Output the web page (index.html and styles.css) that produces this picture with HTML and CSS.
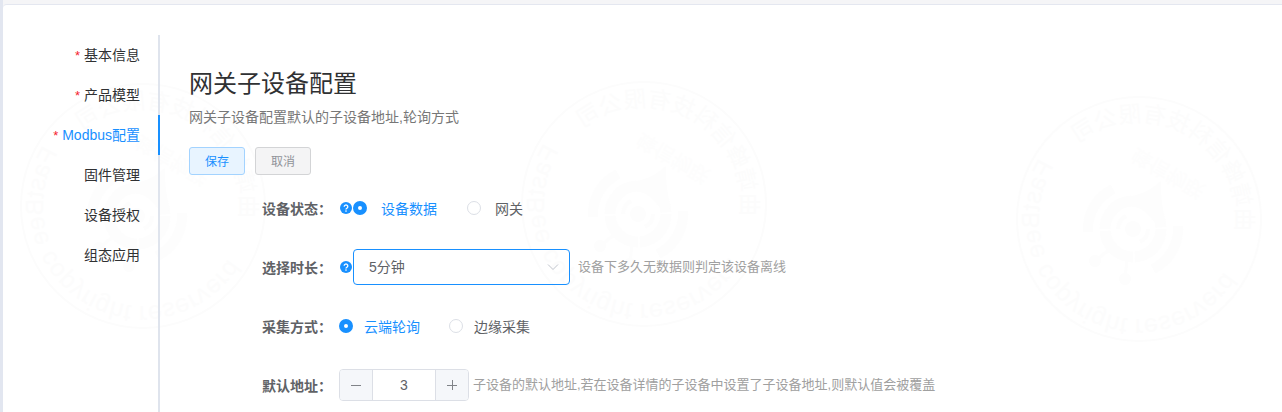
FILE: index.html
```
<!DOCTYPE html>
<html lang="zh-CN">
<head>
  <meta charset="UTF-8" />
  <meta name="viewport" content="width=device-width, initial-scale=1.0"/>
  <title>网关子设备配置</title>
  <link rel="stylesheet" href="styles.css">
</head>
<body>

  <!-- shared icons -->
  <svg class="sprite" aria-hidden="true">
    <symbol id="help" viewBox="0 0 12 12">
      <circle cx="6" cy="6" r="6" fill="#1890ff"/>
      <path d="M4.2 4.7a1.8 1.7 0 1 1 2.7 1.5c-.6.35-.9.6-.9 1.2" fill="none" stroke="#fff" stroke-width="1.3"/>
      <circle cx="6" cy="9.1" r=".8" fill="#fff"/>
    </symbol>
    <symbol id="stamp" viewBox="0 0 248 248">
      <g transform="translate(124 124) scale(1 -1)" fill="#fcfcfc">
        <circle r="122" fill="none" stroke="#fcfcfc" stroke-width="2"/>
        <path id="ring-en" d="M-100 0A100 100 0 0 1 100 0A100 100 0 0 1 -100 0" transform="rotate(-32)" fill="none"/>
        <text font-size="25"><textPath href="#ring-en">FastBee copyright reserverd</textPath></text>
        <path id="ring-cn" d="M97 0A97 97 0 0 1 -97 0A97 97 0 0 1 97 0" transform="rotate(-7)" fill="none"/>
        <text font-size="23"><textPath href="#ring-cn">曲靖蜂信科技有限公司</textPath></text>
      </g>
      <g transform="translate(118 134)">
        <g fill="none" stroke="#fdfdfd">
          <circle r="28" stroke-width="11" stroke-dasharray="42 2"/>
          <path d="M-45 3A45 45 0 0 1 -20 -40" stroke-width="10"/>
          <path d="M45 -3A45 45 0 0 1 20 40" stroke-width="10"/>
          <path d="M-15 0A15 15 0 0 1 -7 -13M15 0A15 15 0 0 1 7 13" stroke-width="4"/>
          <path d="M-23 20L-38 32M-6 30L-8 50" stroke-width="3"/>
        </g>
        <g fill="#fdfdfd">
          <circle r="8"/>
          <circle cx="-38" cy="32" r="6"/>
          <circle cx="-8" cy="50" r="6"/>
          <path d="M-12 -31Q14 -34 28 -48Q27 -30 33 -5L20 -8Q12 -23 -8 -23Z"/>
          <text transform="translate(4 -82) rotate(30) scale(1 -1)" font-size="20">蜂信物联</text>
        </g>
      </g>
    </symbol>
  </svg>

  <div class="card">
    <div class="stamps" aria-hidden="true">
      <svg class="stamp stamp-left"><use href="#stamp"/></svg>
      <svg class="stamp stamp-middle"><use href="#stamp"/></svg>
      <svg class="stamp stamp-right"><use href="#stamp"/></svg>
    </div>

    <nav class="tabs">
      <a href="#" class="tab"><span class="star">*</span> 基本信息</a>
      <a href="#" class="tab"><span class="star">*</span> 产品模型</a>
      <a href="#" class="tab active"><span class="star">*</span> Modbus配置</a>
      <a href="#" class="tab">固件管理</a>
      <a href="#" class="tab">设备授权</a>
      <a href="#" class="tab">组态应用</a>
    </nav>

    <main class="content">
      <h1>网关子设备配置</h1>
      <p class="desc">网关子设备配置默认的子设备地址,轮询方式</p>
      <div class="buttons">
        <button type="button" class="btn primary">保存</button>
        <button type="button" class="btn">取消</button>
      </div>

      <form class="form">
        <div class="row" role="radiogroup" aria-labelledby="status-label">
          <span class="label" id="status-label">设备状态：</span>
          <svg class="help"><use href="#help"/></svg>
          <label class="radio wide"><input type="radio" name="status" checked><span>设备数据</span></label>
          <label class="radio wide"><input type="radio" name="status"><span>网关</span></label>
        </div>

        <div class="row">
          <label class="label" for="duration">选择时长：</label>
          <svg class="help"><use href="#help"/></svg>
          <div class="select">
            <select id="duration">
              <option>5分钟</option>
            </select>
            <svg class="arrow" viewBox="0 0 12 12"><path d="M1 3.5L6 8.5L11 3.5" fill="none" stroke="#c0c4cc"/></svg>
          </div>
          <span class="tip select-tip">设备下多久无数据则判定该设备离线</span>
        </div>

        <div class="row" role="radiogroup" aria-labelledby="mode-label">
          <span class="label" id="mode-label">采集方式：</span>
          <label class="radio"><input type="radio" name="mode" checked><span>云端轮询</span></label>
          <label class="radio"><input type="radio" name="mode"><span>边缘采集</span></label>
        </div>

        <div class="row">
          <label class="label" for="address">默认地址：</label>
          <div class="number">
            <button type="button" aria-label="减少"><svg viewBox="0 0 12 12"><path d="M1 6.5H11" stroke="#808388"/></svg></button>
            <input type="text" id="address" value="3">
            <button type="button" aria-label="增加"><svg viewBox="0 0 12 12"><path d="M1 6.5H11M6.5 1V11" stroke="#808388"/></svg></button>
          </div>
          <span class="tip">子设备的默认地址,若在设备详情的子设备中设置了子设备地址,则默认值会被覆盖</span>
        </div>
      </form>
    </main>
  </div>

</body>
</html>
```
FILE: styles.css
```
* {
  box-sizing: border-box;
}

body {
  margin: 0;
  padding-top: 4px;
  font-family: "Liberation Sans", "Noto Sans CJK SC", sans-serif;
  font-size: 14px;
  color: #606266;
  background: #f5f5f7;
  border-left: 3px solid #e2e6f0;
  overflow: hidden;
}

button, input, select {
  font-family: inherit;
}

.sprite {
  position: absolute;
  width: 0;
  height: 0;
}

.card {
  position: relative;
  display: flex;
  min-height: 100vh;
  padding-top: 30px;
  background: #fff;
  border-top: 1px solid #e4e7f0;
  border-radius: 4px 0 0 0;
}

/* watermark stamps */
.stamps {
  position: absolute;
  inset: 0;
  pointer-events: none;
}

.stamp {
  position: absolute;
  width: 248px;
  height: 248px;
}

.stamp-left {
  left: 16px;
  top: 77px;
}

.stamp-middle {
  left: 517px;
  top: 75px;
}

.stamp-right {
  left: 1012px;
  top: 90px;
}

.tabs {
  position: relative;
  flex: none;
  width: 157px;
  border-right: 2px solid #dfe4ed;
}

.tab {
  display: block;
  height: 40px;
  margin-right: -2px;
  padding-right: 18px;
  border-right: 2px solid transparent;
  line-height: 40px;
  text-align: right;
  text-decoration: none;
  color: #303133;
}

.tab.active {
  color: #1890ff;
  border-right-color: #1890ff;
}

.star {
  font-size: 13px;
  color: #f5222d;
}

.content {
  position: relative;
  flex: 1;
  padding: 32px 0 0 29px;
}

h1 {
  margin: 0;
  font-size: 24px;
  font-weight: normal;
  line-height: 34px;
  color: #303133;
}

.desc {
  margin: 6px 0 0;
  line-height: 20px;
  color: #777;
}

.buttons {
  display: flex;
  gap: 10px;
  margin-top: 20px;
}

.btn {
  width: 56px;
  height: 28px;
  padding: 0 0 2px;
  font-size: 12px;
  color: #909399;
  background: #f4f4f5;
  border: 1px solid #d3d4d6;
  border-radius: 3px;
}

.btn.primary {
  color: #1890ff;
  background: #e8f4ff;
  border-color: #a3d3ff;
}

.form {
  margin-top: 15px;
}

.row {
  display: flex;
  align-items: center;
  height: 36px;
  margin-bottom: 23px;
}

.label {
  flex: none;
  width: 150px;
  padding-left: 73px;
  font-weight: bold;
  white-space: nowrap;
}

.help {
  flex: none;
  width: 12px;
  height: 12px;
  margin: 0 1px;
}

.radio {
  display: flex;
  align-items: center;
  gap: 11px;
  margin-right: 29px;
}

.radio.wide {
  gap: 14px;
  margin-right: 30px;
}

.radio input {
  appearance: none;
  width: 14px;
  height: 14px;
  margin: 0;
  background: #fff;
  border: 1px solid #dcdfe6;
  border-radius: 50%;
}

.radio input:checked {
  border: 5px solid #1890ff;
}

.radio input:checked + span {
  color: #1890ff;
}

.select {
  position: relative;
  width: 217px;
}

.select select {
  appearance: none;
  display: block;
  width: 100%;
  height: 36px;
  padding: 0 30px 0 15px;
  font-size: 14px;
  color: #606266;
  background: transparent;
  border: 1px solid #1890ff;
  border-radius: 4px;
}

.arrow {
  position: absolute;
  top: 12px;
  right: 11px;
  width: 12px;
  height: 12px;
  pointer-events: none;
}

.tip {
  margin-left: 4px;
  font-size: 13px;
  line-height: 20px;
  color: #a0a0a0;
  white-space: nowrap;
}

.select-tip {
  margin-left: 8px;
}

.number {
  display: flex;
  width: 130px;
  height: 32px;
  border: 1px solid #dcdfe6;
  border-radius: 4px;
  overflow: hidden;
}

.number button {
  flex: none;
  width: 32px;
  padding: 0;
  background: #f5f7fa;
  border: none;
}

.number button svg {
  display: block;
  width: 12px;
  height: 12px;
  margin: 0 auto;
}

.number input {
  flex: 1;
  min-width: 0;
  padding: 0;
  font-size: 14px;
  text-align: center;
  color: #606266;
  border: solid #dcdfe6;
  border-width: 0 1px;
}
```
